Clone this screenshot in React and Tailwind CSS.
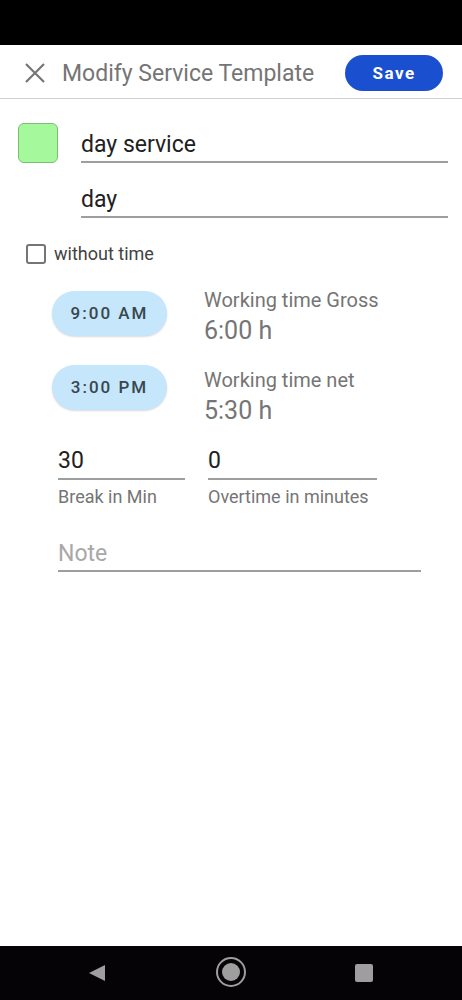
export default function App() {
  return (
    <div className="w-[462px] h-[1000px] bg-white flex flex-col font-['Roboto',sans-serif] overflow-hidden">
      <div className="h-[45px] bg-black shrink-0" />

      <div className="h-[54px] pt-[3px] flex items-center border-b border-[#cfcfcf] shrink-0">
        <svg className="ml-[24px]" width="22" height="22" viewBox="0 0 22 22" fill="none" stroke="#757575" strokeWidth="2.2">
          <path d="M2 2L20 20M20 2L2 20" />
        </svg>
        <span className="ml-[16px] text-[23px] text-[#757575] leading-none">Modify Service Template</span>
        <button className="ml-auto mr-[19px] w-[98px] h-[36px] rounded-full bg-[#1a4fcf] text-white text-[17px] font-bold tracking-[1.5px] leading-none">
          Save
        </button>
      </div>

      <div className="flex-1 flex flex-col">
        <div className="flex pt-[24px]">
          <div className="ml-[18px] w-[40px] h-[40px] rounded-[6px] bg-[#a6f89c] border border-[#7cbf74] shrink-0" />
          <div className="ml-[23px] mr-[14px] flex-1 flex flex-col">
            <div className="h-[40px] border-b-2 border-[#9e9e9e] flex items-end pb-[5px]">
              <span className="text-[23px] text-[#212121] leading-none">day service</span>
            </div>
            <div className="mt-[15px] h-[40px] border-b-2 border-[#9e9e9e] flex items-end pb-[5px]">
              <span className="text-[23px] text-[#212121] leading-none">day</span>
            </div>
          </div>
        </div>

        <div className="flex items-center mt-[26px] ml-[26px]">
          <div className="w-[20px] h-[20px] rounded-[3px] border-2 border-[#757575]" />
          <span className="ml-[8px] text-[18px] text-[#424242] leading-none">without time</span>
        </div>

        <div className="flex mt-[27px] ml-[52px]">
          <div className="flex flex-col gap-[29px]">
            <div className="w-[115px] h-[45px] rounded-full bg-[#c5e6fb] shadow-[0_1px_2px_rgba(0,0,0,0.15)] flex items-center justify-center text-[17px] font-medium tracking-[2px] text-[#37474f]">
              9:00 AM
            </div>
            <div className="w-[115px] h-[45px] rounded-full bg-[#c5e6fb] shadow-[0_1px_2px_rgba(0,0,0,0.15)] flex items-center justify-center text-[17px] font-medium tracking-[2px] text-[#37474f]">
              3:00 PM
            </div>
          </div>
          <div className="ml-[37px] flex flex-col text-[#757575]">
            <span className="text-[20px] leading-[24px] -mt-[3px]">Working time Gross</span>
            <span className="text-[25px] leading-[30px] mt-[4px]">6:00 h</span>
            <span className="text-[20px] leading-[24px] mt-[22px]">Working time net</span>
            <span className="text-[25px] leading-[30px] mt-[4px]">5:30 h</span>
          </div>
        </div>

        <div className="flex mt-[18px] ml-[58px]">
          <div className="w-[127px] flex flex-col">
            <div className="h-[36px] border-b-2 border-[#9e9e9e] flex items-end pb-[6px]">
              <span className="text-[23px] text-[#212121] leading-none">30</span>
            </div>
            <span className="mt-[8px] text-[18px] text-[#757575] leading-none">Break in Min</span>
          </div>
          <div className="ml-[23px] w-[169px] flex flex-col">
            <div className="h-[36px] border-b-2 border-[#9e9e9e] flex items-end pb-[6px]">
              <span className="text-[23px] text-[#212121] leading-none">0</span>
            </div>
            <span className="mt-[8px] text-[18px] text-[#757575] leading-none">Overtime in minutes</span>
          </div>
        </div>

        <div className="ml-[58px] w-[363px] mt-[26px] h-[40px] border-b-2 border-[#9e9e9e] flex items-end pb-[5px]">
          <span className="text-[23px] text-[#a8a8a8] leading-none">Note</span>
        </div>
      </div>

      <div className="h-[54px] bg-[#050305] shrink-0 flex items-center relative">
        <svg className="absolute left-[88px] top-[18px]" width="18" height="18" viewBox="0 0 18 18">
          <path d="M17 1V17L1 9Z" fill="#9e9e9e" />
        </svg>
        <svg className="absolute left-[215px] top-[10px]" width="32" height="32" viewBox="0 0 32 32">
          <circle cx="16" cy="16" r="14" fill="none" stroke="#9e9e9e" strokeWidth="2" />
          <circle cx="16" cy="16" r="9" fill="#9e9e9e" />
        </svg>
        <div className="absolute left-[355px] top-[18px] w-[18px] h-[18px] rounded-[2px] bg-[#9e9e9e]" />
      </div>
    </div>
  );
}
